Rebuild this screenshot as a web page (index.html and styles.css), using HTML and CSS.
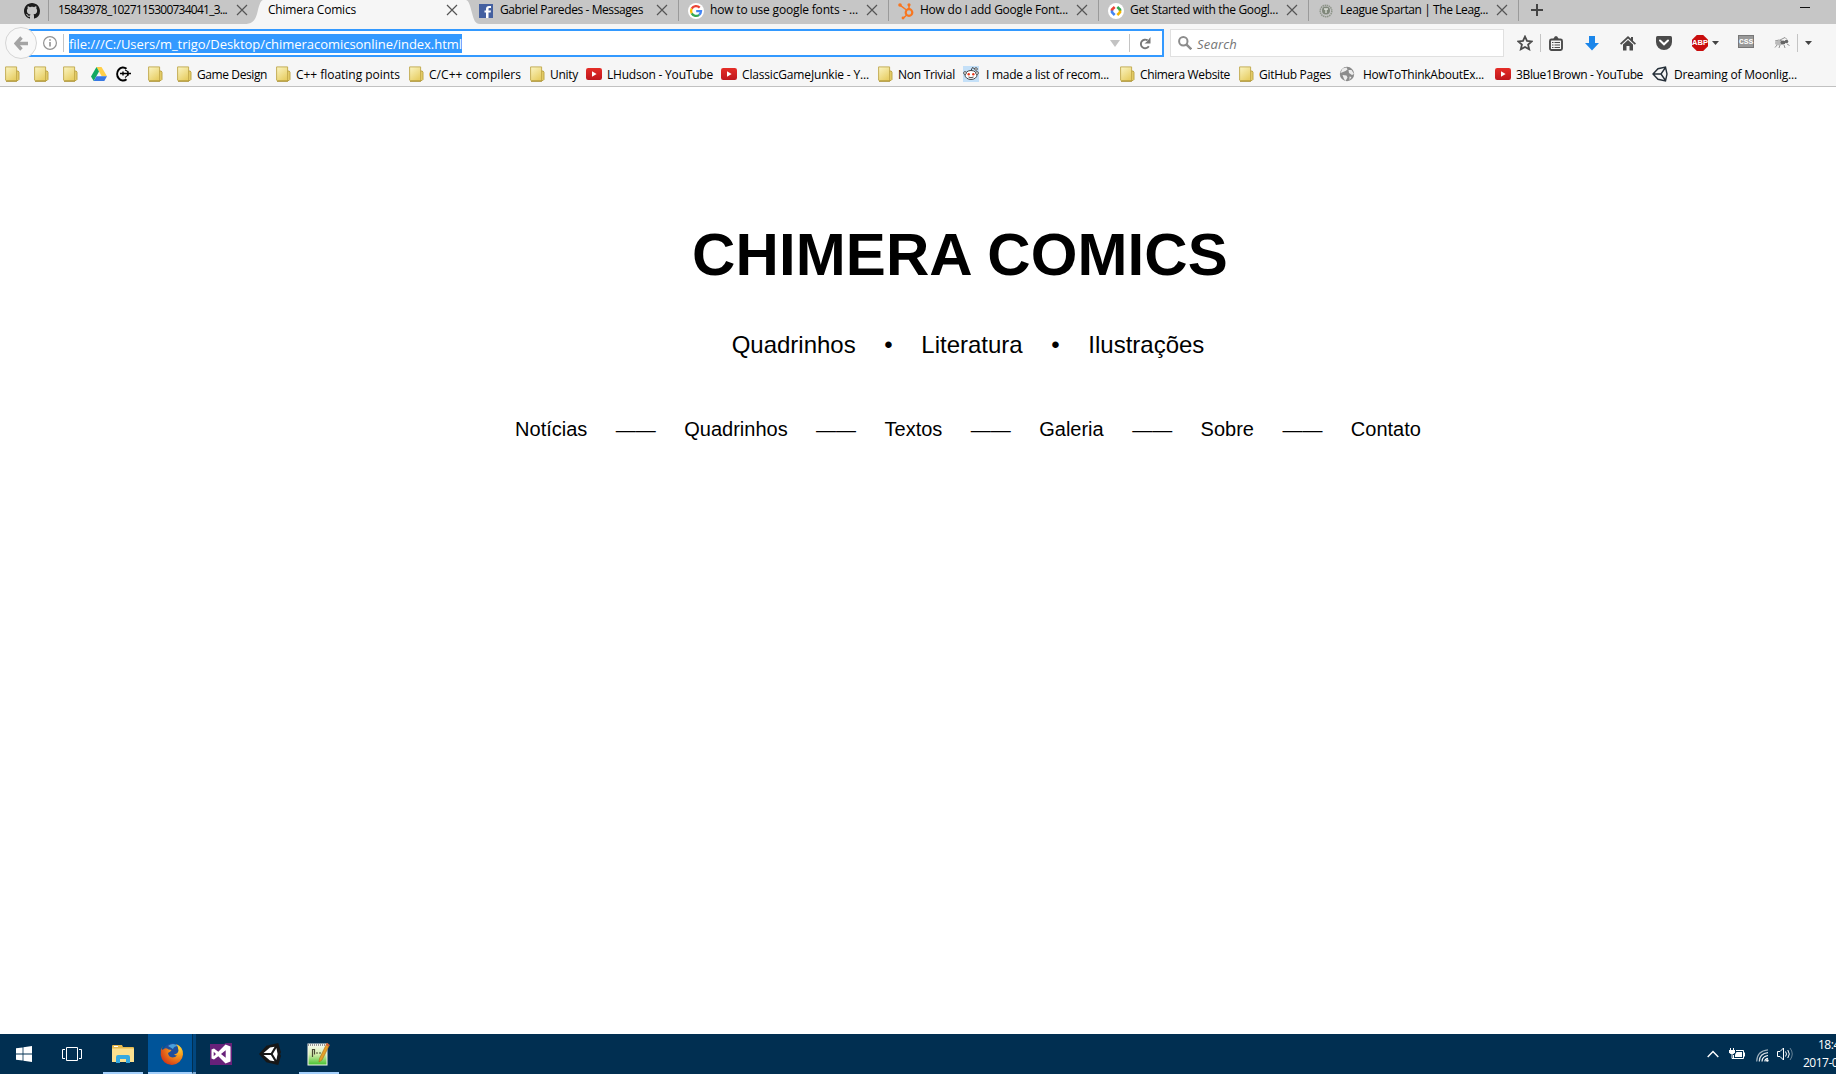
FILE: index.html
```html
<!DOCTYPE html>
<html lang="pt">
<head>
<meta charset="utf-8">
<title>Chimera Comics</title>
<link rel="stylesheet" href="styles.css">
</head>
<body>
<svg class="defs" width="0" height="0">
  <defs>
    <linearGradient id="fold" x1="0" y1="0" x2="0.6" y2="1"><stop offset="0" stop-color="#fbf5c4"/><stop offset="1" stop-color="#e8cf66"/></linearGradient>
    <linearGradient id="red" x1="0" y1="0" x2="0" y2="1"><stop offset="0" stop-color="#e52d27"/><stop offset="1" stop-color="#bf171d"/></linearGradient>
    <radialGradient id="fox" cx="0.8" cy="0.2" r="0.9"><stop offset="0" stop-color="#ffd83a"/><stop offset="0.4" stop-color="#f79a1c"/><stop offset="1" stop-color="#d53a16"/></radialGradient>
    <linearGradient id="note" x1="0" y1="0" x2="0" y2="1"><stop offset="0" stop-color="#fbfcf5"/><stop offset="0.5" stop-color="#d3eeac"/><stop offset="1" stop-color="#43c02c"/></linearGradient>
  </defs>
  <symbol id="folder" viewBox="0 0 16 16"><path d="M11 5h2.200l.8 1.200v7.300l-1 1h-3z" fill="#e6ce6a" stroke="#b99f3c" stroke-width=".9"/><path d="M.6.9h11v14H1.400l-.8-.7z" fill="url(#fold)" stroke="#c0a74a" stroke-width=".9"/><path d="M1 15.200h11" stroke="#a98d2c" stroke-width="1"/></symbol>
  <symbol id="yt" viewBox="0 0 16 16"><rect y="2" width="16" height="12" rx="2.200" fill="url(#red)"/><path d="M6 5.300v5.400l4.600-2.700z" fill="#fff"/></symbol>
  <symbol id="close" viewBox="0 0 12 12"><path d="M1 1l10 10M11 1L1 11" stroke="#555" stroke-width="1.200"/></symbol>
  <symbol id="unity" viewBox="0 0 16 16"><path d="M1 8L6 2.700L13.500 1L15 8L13.500 15L6 13.300zM1.500 8H9L13.500 1.500M9 8L13.500 14.500" fill="none" stroke="#252f39" stroke-width="1.400"/></symbol>
</svg>

<header class="browser">
  <div class="tabs">
    <div class="tab pinned"><svg width="16" height="16" viewBox="0 0 16 16"><path fill="#1c1c1c" d="M8 0C3.580 0 0 3.580 0 8c0 3.540 2.290 6.530 5.470 7.590.4.070.55-.17.55-.38 0-.19-.01-.82-.01-1.490-2.010.37-2.530-.49-2.690-.94-.09-.23-.48-.94-.82-1.130-.28-.15-.68-.52-.01-.53.63-.01 1.080.58 1.230.82.72 1.210 1.870.87 2.330.66.07-.52.28-.87.51-1.070-1.780-.2-3.640-.89-3.640-3.950 0-.87.31-1.590.82-2.150-.08-.2-.36-1.020.08-2.120 0 0 .67-.21 2.200.82.64-.18 1.320-.27 2-.27s1.360.09 2 .27c1.530-1.040 2.200-.82 2.200-.82.44 1.100.16 1.920.08 2.120.51.56.82 1.270.82 2.150 0 3.070-1.870 3.750-3.650 3.950.29.25.54.73.54 1.480 0 1.070-.01 1.930-.01 2.200 0 .21.15.46.55.38A8.010 8.010 0 0 0 16 8c0-4.420-3.580-8-8-8z"/></svg></div>
    <div class="tab plain"><span class="label" data-width="169">15843978_1027115300734041_3...</span><svg class="x"><use href="#close"/></svg></div>
    <div class="tab active"><svg class="shape" width="236" height="24" viewBox="0 0 236 24"><path fill="#f6f6f6" d="M0 24C9 24 11 20 13 14C15 6 16 1 19 0H222C225 1 226 5 228 13C230 20 231 24 236 24z"/></svg><span class="label" data-width="88">Chimera Comics</span><svg class="x"><use href="#close"/></svg></div>
    <div class="tab next"><svg width="16" height="16" viewBox="0 0 16 16"><rect x="1" y="1" width="14" height="14" fill="#4460a0"/><path d="M8 15V9.500H6.500v-2H8V6c0-2 1-3 3-3h2v2h-1.500c-.8 0-1 .4-1 1v1.500H13l-.4 2h-2.100V15z" fill="#fff"/></svg><span class="label" data-width="143">Gabriel Paredes - Messages</span><svg class="x"><use href="#close"/></svg></div>
    <div class="tab"><svg width="16" height="16" viewBox="0 0 16 16"><circle cx="8" cy="8" r="8" fill="#fff"/><g fill="none" stroke-width="2.300"><path d="M11.700 4.600A5 5 0 0 0 3.700 5.600" stroke="#ea4335"/><path d="M3.700 5.600a5 5 0 0 0 0 4.800" stroke="#fbbc05"/><path d="M3.700 10.400a5 5 0 0 0 7.500 1.400" stroke="#34a853"/><path d="M11.200 11.800A5 5 0 0 0 13 8.200H8.200" stroke="#4285f4"/></g></svg><span class="label" data-width="148">how to use google fonts - ...</span><svg class="x"><use href="#close"/></svg></div>
    <div class="tab"><svg width="16" height="18" viewBox="0 0 16 18"><g fill="none" stroke="#f8761f"><circle cx="11" cy="10.500" r="3.300" stroke-width="2.200"/><path d="M11 7V3M8.500 8L2 3.200M8.700 13L5.500 16" stroke-width="1.500"/></g><g fill="#f8761f"><circle cx="2" cy="3" r="1.800"/><circle cx="11" cy="2.800" r="1.600"/><circle cx="5" cy="16" r="1.400"/></g></svg><span class="label" data-width="148">How do I add Google Font...</span><svg class="x"><use href="#close"/></svg></div>
    <div class="tab"><svg width="16" height="16" viewBox="0 0 16 16"><circle cx="8" cy="8" r="8" fill="#fff"/><g fill="none" stroke-width="2.600"><path d="M6.700 4L4 6.500V8" stroke="#ea4335"/><path d="M4 7.500v1.800L6.700 12" stroke="#4285f4"/><path d="M9.300 4L12 6.500V8" stroke="#34a853"/><path d="M12 7.500v1.800L9.300 12" stroke="#f4b400"/></g></svg><span class="label" data-width="148">Get Started with the Googl...</span><svg class="x"><use href="#close"/></svg></div>
    <div class="tab"><svg width="16" height="16" viewBox="0 0 16 16"><circle cx="8" cy="8" r="5.800" fill="none" stroke="#8d9488" stroke-width="1.500" stroke-dasharray="1.500 .6"/><circle cx="8" cy="7.500" r="4" fill="#7f877a"/><path d="M6 6h4M8 6v4" stroke="#dde0da" stroke-width="1.300"/></svg><span class="label" data-width="148">League Spartan | The Leag...</span><svg class="x"><use href="#close"/></svg></div>
    <svg class="plus" width="12" height="12" viewBox="0 0 12 12"><path d="M6 0v12M0 6h12" stroke="#444" stroke-width="2"/></svg>
    <svg class="minimize" width="10" height="2"><rect width="10" height="1" fill="#111"/></svg>
  </div>

  <div class="navbar">
    <div class="back"><svg width="14" height="15" viewBox="0 0 14 15"><path d="M7.500 1.500L2 7.500L7.500 13.500M2 7.500h12" fill="none" stroke="#a4a4a4" stroke-width="3.400"/></svg></div>
    <div class="url">
      <svg class="info" width="14" height="14" viewBox="0 0 14 14"><circle cx="7" cy="7" r="6.400" fill="none" stroke="#929292" stroke-width="1.200"/><path d="M7 6v4.500M7 3.200v1.600" stroke="#929292" stroke-width="1.600"/></svg>
      <i class="rule"></i>
      <span class="address"><span class="label" data-width="393">file:///C:/Users/m_trigo/Desktop/chimeracomicsonline/index.html</span></span>
      <svg class="history" width="10" height="7"><path d="M0 0h10L5 7z" fill="#c3c3c3"/></svg>
      <i class="rule"></i>
      <svg class="reload" width="12" height="13" viewBox="0 0 12 13"><path d="M9.800 9.300A4.300 4.300 0 1 1 8.600 3.400" fill="none" stroke="#777" stroke-width="1.900"/><path d="M11.500 0V6.500H5.500L8 4.500z" fill="#777"/></svg>
    </div>
    <div class="search"><svg width="14" height="14" viewBox="0 0 14 14"><circle cx="5.300" cy="5.300" r="4.200" fill="none" stroke="#8c8c8c" stroke-width="2"/><path d="M8.300 8.300l5 5" stroke="#8c8c8c" stroke-width="2.400"/></svg><span class="label" data-width="40">Search</span></div>
    <div class="tools">
      <svg class="star" width="16" height="16" viewBox="0 0 16 16"><path d="M8 1.600l2 4.300 4.700.5-3.600 3.200 1.100 4.700L8 12l-4.200 2.300 1.100-4.700L1.300 6.400 6 5.900z" fill="none" stroke="#4b4b4b" stroke-width="1.800"/></svg>
      <i class="rule"></i>
      <svg class="list" width="14" height="15" viewBox="0 0 14 15"><path d="M4.500 3V2.500L6 .3h2l1.500 2.200V3" fill="#4b4b4b"/><rect x="1" y="3.500" width="12" height="10.500" rx="1.500" fill="none" stroke="#4b4b4b" stroke-width="1.900"/><path d="M3 6.500h1.500M5.500 6.500H11M3 9h1.500M5.500 9H11M3 11.500h1.500M5.500 11.500H11" stroke="#4b4b4b" stroke-width="1.200"/></svg>
      <svg class="down" width="14" height="15" viewBox="0 0 14 15"><path d="M4 0h6v7h4l-7 7.500L0 7h4z" fill="#1b86ea"/></svg>
      <svg class="home" width="16" height="15" viewBox="0 0 16 15"><path d="M0 7.500L8 0l3 2.800V1h2v3.700l3 2.800-1.200 1.200L8 2.500 1.200 8.700z" fill="#4b4b4b"/><path d="M3 8.500l5-4.600 5 4.600V14.500H9.500V10h-3v4.500H3z" fill="#4b4b4b"/></svg>
      <svg class="pocket" width="16" height="14" viewBox="0 0 16 14"><path d="M1.500 0h13Q16 0 16 1.500V6a8 8 0 0 1-16 0V1.500Q0 0 1.500 0z" fill="#4b4b4b"/><path d="M4 4.500l4 3.800 4-3.800" fill="none" stroke="#fff" stroke-width="2" stroke-linecap="round"/></svg>
      <span class="abp">ABP</span>
      <svg class="caret" width="7" height="4"><path d="M0 0h7L3.500 4z" fill="#444"/></svg>
      <span class="css">CSS</span>
      <svg class="fly" width="16" height="12" viewBox="0 0 16 12"><path d="M1 4l4-1 3 1M6 3l5-2.500 2 2M3 8l-2 2.500M6 8l-1 3M10 8l1 3M13 7l2.500 1.500" stroke="#888" stroke-width=".9" fill="none"/><ellipse cx="5" cy="6" rx="4" ry="2.300" fill="#bbb"/><ellipse cx="9" cy="5.500" rx="2.500" ry="2" fill="#666"/><circle cx="12.500" cy="4.500" r="1.800" fill="#666"/></svg>
      <i class="rule"></i>
      <svg class="caret" width="7" height="4"><path d="M0 0h7L3.500 4z" fill="#444"/></svg>
    </div>
  </div>

  <nav class="bookmarks">
    <a class="mark w29"><svg><use href="#folder"/></svg></a>
    <a class="mark w29"><svg><use href="#folder"/></svg></a>
    <a class="mark w28"><svg><use href="#folder"/></svg></a>
    <a class="mark w24"><svg viewBox="0 0 16 16"><path d="M5.500 1h5L16 10.300h-5.300z" fill="#ffcf48"/><path d="M5.500 1L0 10.500 2.700 15 8 5.500z" fill="#11a861"/><path d="M2.700 15l2.800-4.700H16L13.300 15z" fill="#3777e3"/></svg></a>
    <a class="mark w33"><svg viewBox="0 0 16 16"><path d="M11.500 2.800A5.800 6.500 0 1 0 11.500 13.200" fill="none" stroke="#000" stroke-width="2.100"/><path d="M10 11.500Q12.500 10.500 13 8M10 4Q12.300 4.500 13 6.500" fill="none" stroke="#000" stroke-width="1.200"/><path d="M5 7.500H16M8 5.500v4M13 5.200v4.600" stroke="#000" stroke-width="1.400"/></svg></a>
    <a class="mark w29"><svg><use href="#folder"/></svg></a>
    <a class="mark w99"><svg><use href="#folder"/></svg><span class="label" data-width="70">Game Design</span></a>
    <a class="mark w133"><svg><use href="#folder"/></svg><span class="label" data-width="104">C++ floating points</span></a>
    <a class="mark w121"><svg><use href="#folder"/></svg><span class="label" data-width="92">C/C++ compilers</span></a>
    <a class="mark w56"><svg><use href="#folder"/></svg><span class="label" data-width="28">Unity</span></a>
    <a class="mark wide w135"><svg><use href="#yt"/></svg><span class="label" data-width="106">LHudson - YouTube</span></a>
    <a class="mark wide w157"><svg><use href="#yt"/></svg><span class="label" data-width="127">ClassicGameJunkie - Y...</span></a>
    <a class="mark w85"><svg><use href="#folder"/></svg><span class="label" data-width="57">Non Trivial</span></a>
    <a class="mark far w157"><svg viewBox="0 0 16 16"><rect width="16" height="16" fill="#c4e0f8"/><ellipse cx="8" cy="9" rx="6" ry="4.500" fill="#fff" stroke="#333" stroke-width=".9"/><circle cx="2" cy="7" r="1.400" fill="#fff" stroke="#333" stroke-width=".8"/><circle cx="14" cy="7" r="1.400" fill="#fff" stroke="#333" stroke-width=".8"/><path d="M8 4.500l1.500-3L12 3M5.500 11q2.500 1.500 5 0" fill="none" stroke="#333" stroke-width=".9"/><circle cx="13" cy="3" r="1.300" fill="#fff" stroke="#333" stroke-width=".8"/><circle cx="5.700" cy="8.300" r="1.200" fill="#e8391c"/><circle cx="10.300" cy="8.300" r="1.200" fill="#e8391c"/></svg><span class="label" data-width="123">I made a list of recom...</span></a>
    <a class="mark w119"><svg><use href="#folder"/></svg><span class="label" data-width="90">Chimera Website</span></a>
    <a class="mark w100"><svg><use href="#folder"/></svg><span class="label" data-width="72">GitHub Pages</span></a>
    <a class="mark globe w156"><svg viewBox="0 0 16 16"><circle cx="8" cy="8" r="7.200" fill="#8b8b8b"/><path d="M3.500 2.500l4-1 1 2-2 1.500-2.500 1L1.500 7zM9.500 4l3 0 2.500 4-2 1-3-2zM3.500 9l4 .5 1 2-2 3.500-1.500-2zM10.500 10.500l2 .5-2 3z" fill="#ececec"/></svg><span class="label" data-width="121">HowToThinkAboutEx...</span></a>
    <a class="mark wide w157"><svg><use href="#yt"/></svg><span class="label" data-width="127">3Blue1Brown - YouTube</span></a>
    <a class="mark far2 w157"><svg><use href="#unity"/></svg><span class="label" data-width="123">Dreaming of Moonlig...</span></a>
  </nav>
</header>

<main class="page">
  <h1>CHIMERA COMICS</h1>
  <div class="genres"><span>Quadrinhos</span><span>•</span><span>Literatura</span><span>•</span><span>Ilustrações</span></div>
  <div class="menu"><a>Notícias</a><span>——</span><a>Quadrinhos</a><span>——</span><a>Textos</a><span>——</span><a>Galeria</a><span>——</span><a>Sobre</a><span>——</span><a>Contato</a></div>
</main>

<footer class="taskbar">
  <div class="task start"><svg width="16" height="16" viewBox="0 0 16 16"><path d="M0 2.300L6.600 1.400V7.600H0zM7.400 1.300L16 0V7.600H7.400zM0 8.400h6.600v6.200L0 13.700zM7.400 8.400H16V16L7.400 14.700z" fill="#fff"/></svg></div>
  <div class="task view"><svg width="20" height="14" viewBox="0 0 20 14"><path d="M4.500.5h11v13h-11zM3 2.500H.5v9H3M17 2.500h2.500v9H17" fill="none" stroke="#fff"/></svg></div>
  <div class="task open files"><svg width="22" height="18" viewBox="0 0 22 18"><path d="M0 1q0-1 1-1h9l1 2h10q1 0 1 1v14H0z" fill="#e6b94d"/><path d="M0 3.500h22V17H0z" fill="#fbe08f"/><path d="M4 18V12q0-2 2-2h10q2 0 2 2v6h-4v-4H8v4z" fill="#35a9e0"/><path d="M2 1h4v1H2z" fill="#fff"/></svg></div>
  <div class="task open firefox"><svg width="24" height="24" viewBox="0 0 24 24"><circle cx="12.500" cy="11" r="9.800" fill="#1f4f9b"/><path d="M8 4q5-4 10 0-4 0-5 3z" fill="#48a0dc"/><path d="M2.500 4q-1 3 0 4Q5.500 5 8.500 7.500q2 0 3 .5-1 2-3.500 3Q8.500 15 12.500 15.500q3 0 4.500-2-2 0-3-1 4-.5 4.500-4Q18.500 5 16 2 23.500 5 23 12.500A11.200 11.200 0 0 1 .7 13Q0 8 2.500 4z" fill="url(#fox)"/></svg></div>
  <div class="edge"></div>
  <div class="task studio"><svg width="22" height="22" viewBox="0 0 22 22"><path d="M0 1h14l2-1h6v22H0z" fill="#68217a"/><path fill-rule="evenodd" d="M1.500 6.500L4 5.500L8.300 8.800L15.500 1.500L20.500 3.500V18.500L15.500 20.500L8.300 13.200L4 16.500L1.500 15.500zM3.700 8.700V13.300L6 11zM15.700 7.300L11 11L15.700 14.700z" fill="#fff"/></svg></div>
  <div class="task cube"><svg width="22" height="22" viewBox="0 0 24 24"><path d="M0 12L8 3L21 0l3 10-1 2 1 2-3 10L8 21z" fill="#171717"/><path d="M5 11L12 5l5-1-4 7zM5 13l8 0 4 7-5-1zM15 12l4-6.500 1.300 6.500L19 18.500z" fill="#fff"/></svg></div>
  <div class="task open notes"><svg width="23" height="24" viewBox="0 0 23 24"><rect x="1" y="2" width="19" height="21" fill="url(#note)" stroke="#f5f5ee"/><path d="M1 3h18" stroke="#999" stroke-width="2" stroke-dasharray="1 1"/><path d="M5.500 7v8M5.500 7.500h2v5M9 11h2M12 11h2" stroke="#4a4a33" stroke-width="1.200" fill="none"/><path d="M20 1l2.500 2L15 18l-3 2 .5-3.500z" fill="#e6a128" stroke="#ab6a17" stroke-width=".6"/><path d="M20 1l2.500 2-1 1.500-2.500-1.500z" fill="#c95b42"/></svg></div>
  <div class="tray">
    <svg class="chevron" width="12" height="8" viewBox="0 0 12 8"><path d="M.7 7L6 1.500 11.300 7" fill="none" stroke="#fff" stroke-width="1.400"/></svg>
    <svg class="power" width="16" height="12" viewBox="0 0 16 12"><path d="M1.500 0v2M4.500 0v2" stroke="#fff"/><path d="M0 2h6v2.500L4.500 6h-3L0 4.500z" fill="#fff"/><path d="M3 6v4.500h2" stroke="#fff" fill="none"/><path d="M7 2.500h7.500v8H4.500V7" stroke="#fff" fill="none"/><path d="M7.500 4H13v5H6V6.500z" fill="#fff"/><path d="M15.500 4.500v4" stroke="#fff"/></svg>
    <svg class="wifi" width="13" height="13" viewBox="0 0 13 13"><g fill="none" stroke="#fff" stroke-width="1.200"><path d="M9 12.500Q8.500 10 12 9.300" /><path d="M6 12.500Q6 7.500 12 6.500"/><path d="M3.300 12.500Q3.500 4.500 12 3.700" opacity=".85"/><path d="M.7 12.500Q1 2 12 .9" opacity=".6"/></g><circle cx="11.300" cy="11.500" r="1.300" fill="#fff"/></svg>
    <svg class="sound" width="16" height="14" viewBox="0 0 16 14"><path d="M.5 4.500H3L6.500 1v12L3 9.500H.5z" fill="none" stroke="#fff"/><path d="M8.500 4.500q2 2.500 0 5M10.800 3q3 4 0 8" fill="none" stroke="#fff"/><path d="M13 1q4.500 6 0 12" fill="none" stroke="#fff" opacity=".4"/></svg>
    <div class="clock"><span class="time">18:4</span><span>2017-0</span></div>
  </div>
</footer>
<script src="fit.js"></script>
</body>
</html>
```
FILE: styles.css
```css
* { box-sizing: border-box; }
body {
  margin: 0;
  height: 1074px;
  overflow: hidden;
  display: flex;
  flex-direction: column;
  background: #fff;
  color: #000;
  font-family: "Open Sans", "Noto Sans", sans-serif;
  font-size: 12px;
}
.defs { position: absolute; }
svg { display: block; flex: none; }
.label { display: inline-block; white-space: nowrap; line-height: 16px; flex: none; }
.browser { flex: none; height: 87px; background: #f6f6f6; border-bottom: 1px solid #c1c1c1; }

/* tab strip */
.tabs { display: flex; height: 24px; background: #c6c6c6; overflow: hidden; }
.tab { display: flex; align-items: center; position: relative; width: 210px; flex: none; height: 21px; padding-left: 9px; border-right: 1px solid #9a9a9a; }
.tab > svg, .tab > .label { position: relative; }
.tab .label { margin-left: 6px; top: -1px; }
.tab .x { width: 12px; height: 12px; margin-left: auto; margin-right: 10px; top: -.5px; }
.tab.pinned { width: 49px; padding-left: 24px; }
.tab.plain { width: 209px; padding-left: 3px; border: 0; }
.tab.active { width: 210px; padding-left: 4px; border: 0; }
.tab.active .shape { position: absolute; left: -14px; top: 0; }
.tab.next { width: 211px; padding-left: 10px; }
.plus { margin: 4px 0 0 12px; }
.minimize { margin: 7px 0 0 257px; }

/* navigation bar */
.navbar { display: flex; align-items: center; height: 38px; }
.back { flex: none; width: 32px; height: 32px; margin-left: 5px; border: 1px solid #d5d5d5; border-radius: 50%; background: #f8f8f8; display: flex; align-items: center; justify-content: center; z-index: 1; }
.url { flex: none; display: flex; align-items: center; width: 1136px; height: 28px; margin-left: -9px; padding-left: 13px; background: #fff; border: 2px solid #3399ff; }
.rule { flex: none; width: 1px; height: 18px; background: #c4c4c4; }
.info + .rule { margin-left: 6px; }
.address { flex: none; margin-left: 5px; width: 393px; height: 19px; margin-top: 1px; background: #3399ff; color: #fff; font-size: 13px; }
.address .label { line-height: 19px; position: relative; top: .5px; }
.history { margin-left: auto; margin-right: 9px; }
.reload { margin: 0 11px 0 9px; }
.search { flex: none; display: flex; align-items: center; width: 334px; height: 28px; margin-left: 6px; padding-left: 7px; background: #fff; border: 1px solid #e0e0e0; color: #757575; font-size: 13px; font-style: italic; }
.search .label { margin-left: 5px; position: relative; top: 1px; }
.tools { display: flex; align-items: center; margin-left: 13px; }
.list { margin-left: 8px; }
.star + .rule { margin-left: 7px; }
.down { margin-left: 22px; }
.home { margin-left: 21px; }
.pocket { margin-left: 20px; }
.abp { width: 16px; height: 16px; margin-left: 20px; background: #c90d0d; color: #fff; font: bold 7.5px/16px "Liberation Sans", sans-serif; text-align: center; clip-path: polygon(30% 0, 70% 0, 100% 30%, 100% 70%, 70% 100%, 30% 100%, 0 70%, 0 30%); }
.caret { margin-left: 4px; }
.css { width: 16px; height: 13px; margin: -3px 0 0 19px; background: #999; border: 1px solid #777; color: #fff; font: bold 8px/11px "Liberation Mono", monospace; text-align: center; }
.fly { margin-left: 20px; }
.fly + .rule { margin-left: 7px; }
.tools .rule + .caret { margin-left: 7px; }

/* bookmarks */
.bookmarks { display: flex; align-items: center; height: 24px; padding-left: 5px; }
.mark { display: flex; align-items: center; flex: none; }
.mark svg { width: 16px; height: 16px; }
.mark .label { margin-left: 4px; position: relative; top: .5px; }
.mark.wide .label { margin-left: 5px; }
.mark.far .label { margin-left: 7px; }
.mark.globe .label { margin-left: 8px; }
.mark.far2 .label { margin-left: 6px; }
.w24 { width: 24px; } .w28 { width: 28px; } .w29 { width: 29px; } .w33 { width: 33px; }
.w56 { width: 56px; } .w85 { width: 85px; } .w99 { width: 99px; } .w100 { width: 100px; }
.w119 { width: 119px; } .w121 { width: 121px; } .w133 { width: 133px; } .w135 { width: 135px; }
.w156 { width: 156px; } .w157 { width: 157px; }

/* page content, laid out on a 1920px wide desktop */
.page { flex: 1; width: 1920px; display: flex; flex-direction: column; align-items: center; padding-top: 138px; font-family: "Liberation Sans", Arial, sans-serif; }
h1 { margin: 0; font-size: 60px; line-height: 60px; font-weight: bold; letter-spacing: .1px; }
.genres { display: flex; gap: 28.6px; margin: 48px 0 0 16px; font-size: 24px; line-height: 24px; }
.menu { display: flex; gap: 28.45px; margin: 62px 0 0 16px; font-size: 20px; line-height: 20px; }
.menu span { padding-top: 1px; }

/* taskbar */
.taskbar { flex: none; display: flex; height: 40px; background: #012f51; overflow: hidden; }
.task { display: flex; align-items: center; justify-content: center; width: 44px; height: 40px; flex: none; }
.task.open { border-bottom: 2px solid #a3cffb; padding-top: 2px; }
.start { width: 48px; }
.view { width: 48px; }
.files { width: 40px; margin-left: 7px; }
.firefox { width: 44px; margin-left: 5px; background: #005499; padding-left: 3px; }
.edge { flex: none; width: 4px; background: #02477f; border-left: 1px solid #012f51; border-bottom: 2px solid #7da9d2; }
.studio { width: 50px; }
.cube { width: 48px; }
.notes { width: 40px; margin-left: 5px; padding-right: 2px; }
.tray { flex: none; display: flex; align-items: center; margin-left: 1368px; color: #fff; font-size: 12px; }
.power { margin-left: 10px; }
.wifi { margin-left: 11px; margin-top: 2px; }
.sound { margin-left: 8px; }
.clock { flex: none; display: flex; flex-direction: column; margin-left: 10px; line-height: 18px; white-space: nowrap; letter-spacing: -.5px; }
.time { padding-left: 15px; }
```
FILE: fit.js
```js
// Tighten or loosen the tracking of each chrome label so that it fills its slot.
document.querySelectorAll('.label[data-width]').forEach(function (el) {
  var natural = el.getBoundingClientRect().width;
  var spacing = (Number(el.dataset.width) - natural) / el.textContent.length;
  el.style.letterSpacing = spacing + 'px';
});
```
